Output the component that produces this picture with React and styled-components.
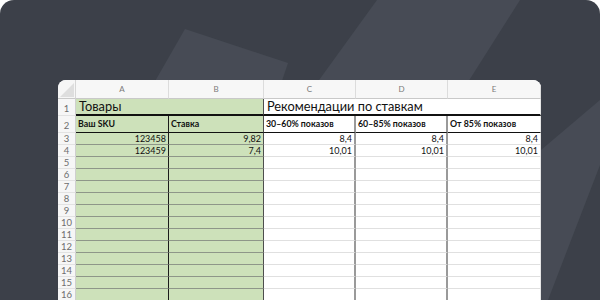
import React from "react";
import styled, { createGlobalStyle } from "styled-components";

const GlobalStyle = createGlobalStyle`
  html, body {
    margin: 0;
    padding: 0;
    background: #ffffff;
  }
  body {
    font-family: Lato, "Noto Sans", "Liberation Sans", sans-serif;
  }
`;

const columns = ["A", "B", "C", "D", "E"];

const dataRows = [
  { n: 3, sku: "123458", bid: "9,82", c: "8,4", d: "8,4", e: "8,4" },
  { n: 4, sku: "123459", bid: "7,4", c: "10,01", d: "10,01", e: "10,01" },
];

const emptyRows = Array.from({ length: 12 }, (_, i) => i + 5);

const App = () => {
  return (
    <Frame>
      <GlobalStyle />
      <Backdrop viewBox="0 0 600 300" preserveAspectRatio="none">
        <polygon points="185,29 288,63 262,140 150,90" fill="#474b55" />
        <polygon points="377,0 520,0 330,300 160,300" fill="#474b55" />
        <polygon points="541,150 600,100 600,165 548,300 541,300" fill="#474b55" />
      </Backdrop>

      <Sheet>
        {/* Column letters */}
        <Corner>
          <svg width="18" height="19" viewBox="0 0 18 19">
            <polygon points="16,3 16,17 2,17" fill="#dedede" />
          </svg>
        </Corner>
        {columns.map((c) => (
          <ColHead key={c}>{c}</ColHead>
        ))}

        {/* Row 1 */}
        <RowNum $tall>1</RowNum>
        <TitleCell $green $span={2}>Товары</TitleCell>
        <TitleCell $span={3}>Рекомендации по ставкам</TitleCell>

        {/* Row 2 */}
        <RowNum $tall>2</RowNum>
        <HeadCell $green $edge="black">Ваш SKU</HeadCell>
        <HeadCell $green $edge="dark">Ставка</HeadCell>
        <HeadCell $edge="gray">30–60% показов</HeadCell>
        <HeadCell $edge="gray">60–85% показов</HeadCell>
        <HeadCell>От 85% показов</HeadCell>

        {dataRows.map((r) => (
          <React.Fragment key={r.n}>
            <RowNum>{r.n}</RowNum>
            <Cell $green $edge="black">{r.sku}</Cell>
            <Cell $green $edge="dark">{r.bid}</Cell>
            <Cell $edge="gray">{r.c}</Cell>
            <Cell $edge="gray">{r.d}</Cell>
            <Cell>{r.e}</Cell>
          </React.Fragment>
        ))}

        {emptyRows.map((n) => (
          <React.Fragment key={n}>
            <RowNum>{n}</RowNum>
            <Cell $green $edge="black" />
            <Cell $green $edge="dark" />
            <Cell $edge="gray" />
            <Cell $edge="gray" />
            <Cell />
          </React.Fragment>
        ))}
      </Sheet>
    </Frame>
  );
};

export default App;

// Styles
const Frame = styled.div`
  position: relative;
  width: 600px;
  height: 300px;
  box-sizing: border-box;
  padding: 80px 0 0 58px;
  background: #3c4049;
  border-radius: 14px 14px 0 0;
  overflow: hidden;
`;

const Backdrop = styled.svg`
  position: absolute;
  inset: 0;
  width: 600px;
  height: 300px;
`;

const Sheet = styled.div`
  position: relative;
  display: grid;
  grid-template-columns: 18px 93px 95px 92px 92px 93px;
  grid-template-rows: 19px 17px 17px;
  grid-auto-rows: 12px;
  width: 483px;
  background: #ffffff;
  border-radius: 8px 8px 0 0;
  overflow: hidden;
`;

const Corner = styled.div`
  background: #f6f6f6;
  border-right: 1px solid #d6d6d6;
  border-bottom: 1px solid #c9c9c9;
  box-sizing: border-box;
  svg {
    display: block;
  }
`;

const ColHead = styled.div`
  display: flex;
  align-items: center;
  justify-content: center;
  box-sizing: border-box;
  background: #f7f7f7;
  border-right: 1px solid #dcdcdc;
  border-bottom: 1px solid #c9c9c9;
  color: #7a7a7a;
  font-size: 8px;
  &:last-of-type {
    border-right: none;
  }
`;

const RowNum = styled.div`
  display: flex;
  align-items: flex-end;
  justify-content: center;
  box-sizing: border-box;
  background: #f6f6f6;
  border-right: 1px solid #cfcfcf;
  border-bottom: 1px solid #e2e2e2;
  color: #6d6d6d;
  font-size: 9.5px;
  line-height: 11px;
  padding-bottom: ${(p) => (p.$tall ? "1px" : "0")};
`;

const edgeColors = {
  black: "1px solid #1c1c1c",
  dark: "1px solid #4e4e4e",
  gray: "2px solid #9a9a9a",
};

const Base = styled.div`
  box-sizing: border-box;
  background: ${(p) => (p.$green ? "#cde1ba" : "#ffffff")};
  border-right: ${(p) => (p.$edge ? edgeColors[p.$edge] : "1px solid #e6e6e6")};
  color: #111;
  white-space: nowrap;
  overflow: hidden;
`;

const TitleCell = styled(Base)`
  grid-column: span ${(p) => p.$span};
  border-right: ${(p) => (p.$green ? "1px solid #4e4e4e" : "1px solid #e6e6e6")};
  border-bottom: 2px solid #111;
  font-size: 12.8px;
  line-height: 15px;
  padding: 0 3px;
  display: flex;
  align-items: flex-end;
`;

const HeadCell = styled(Base)`
  border-bottom: 1px solid #111;
  font-size: 8.8px;
  font-weight: 700;
  padding: 2px 2px 0;
  line-height: 11px;
`;

const Cell = styled(Base)`
  border-bottom: 1px solid ${(p) => (p.$green ? "#8e9689" : "#e0e0e0")};
  font-size: 9px;
  line-height: 11px;
  text-align: right;
  padding: 0 2px;
`;
